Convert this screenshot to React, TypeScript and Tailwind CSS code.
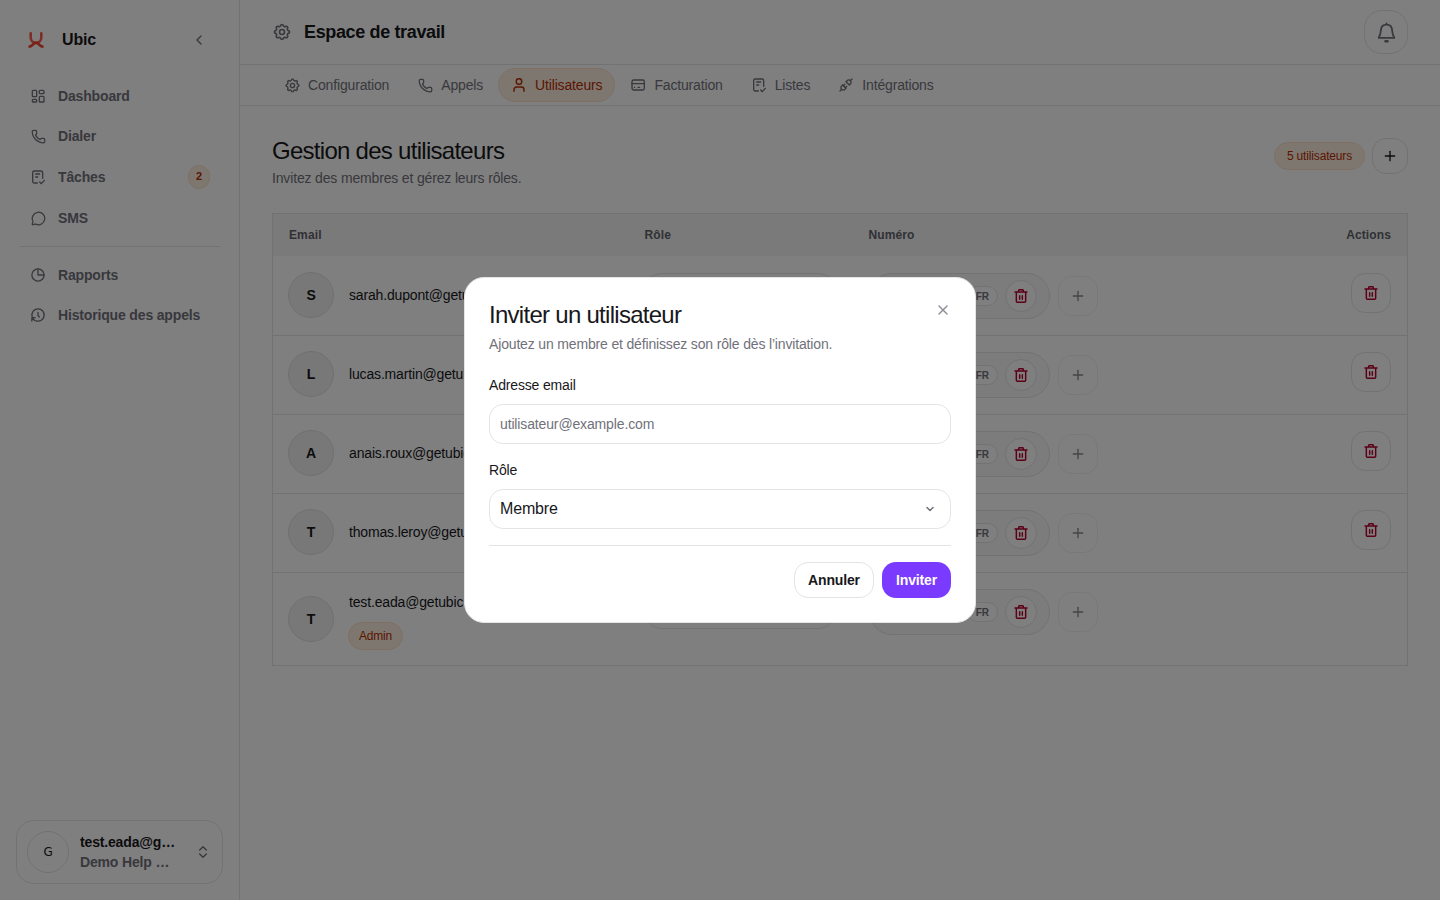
import React, { useState } from 'react';
import { ChevronDown, ChevronLeft, ChevronsUpDown, MessageCircle, Phone, Plus, X } from 'lucide-react';
import { TbPlugConnected, TbSettings } from 'react-icons/tb';

type IconProps = { className?: string };

const svgProps = {
  viewBox: '0 0 24 24',
  fill: 'none',
  stroke: 'currentColor',
  strokeWidth: 2,
  strokeLinecap: 'round' as const,
  strokeLinejoin: 'round' as const,
};

const LogoIcon = () => (
  <svg viewBox="0 0 16 16" fill="none" strokeWidth="2.6" className="size-4">
    <path d="M2.700 1.300v4.200c0 3 2.400 5.200 5.300 5.200s5.300-2.200 5.300-5.200V1.300" stroke="#ff5c4d" strokeLinecap="round" />
    <path d="M0.500 14.700c4.600 0 4-3.800 7.500-3.800s2.900 3.800 7.500 3.800" stroke="#f0432f" />
  </svg>
);

const DashboardIcon = ({ className }: IconProps) => (
  <svg {...svgProps} className={className}>
    <rect x="3.500" y="3.500" width="6.500" height="9.500" rx="1.300" />
    <rect x="14" y="3.500" width="7" height="5" rx="1.300" />
    <rect x="3.500" y="17" width="6.500" height="4" rx="1.300" />
    <rect x="14" y="12.500" width="7" height="8.500" rx="1.300" />
  </svg>
);

const TaskIcon = ({ className }: IconProps) => (
  <svg {...svgProps} className={className}>
    <path d="M11 21H6.500A2.500 2.500 0 0 1 4 18.500V5.500A2.500 2.500 0 0 1 6.500 3h10A2.500 2.500 0 0 1 19 5.500V14" />
    <path d="M8.500 7.500h6M8.500 12h3M14.500 19.500l2.500 2.500 4.500-5" />
  </svg>
);

const PieIcon = ({ className }: IconProps) => (
  <svg {...svgProps} className={className}>
    <circle cx="12" cy="12" r="9.200" />
    <path d="M12 3v9h9" />
  </svg>
);

const HistoryIcon = ({ className }: IconProps) => (
  <svg {...svgProps} className={className}>
    <path d="M3.200 14.500A9.200 9.200 0 1 1 9 20.700" />
    <path d="M2.800 21v-5h5M3 16l4.500 4.500M12 8v4.500l2 2.500" />
  </svg>
);

const UserIcon = ({ className }: IconProps) => (
  <svg {...svgProps} strokeWidth={2.2} className={className}>
    <rect x="8" y="2.500" width="8" height="8.500" rx="3.500" />
    <path d="M4.500 21.500v-2.500a4 4 0 0 1 4-4h7a4 4 0 0 1 4 4v2.500" />
  </svg>
);

const CardIcon = ({ className }: IconProps) => (
  <svg {...svgProps} className={className}>
    <rect x="3" y="4.500" width="18.500" height="15" rx="2.500" />
    <path d="M3 10h18.500M6.500 15.500h.5M12 15.500h2.500" />
  </svg>
);

const BellIcon = ({ className }: IconProps) => (
  <svg {...svgProps} className={className}>
    <path d="M12 1.500v1.500M12 3c-3.800 0-6.200 2.700-6.400 6.300-.2 3.700-.6 5.700-2.600 8.700h18c-2-3-2.400-5-2.600-8.700C18.200 5.700 15.800 3 12 3Z" />
    <path d="M11 22h2" strokeWidth={3} />
  </svg>
);

const TrashIcon = ({ className }: IconProps) => (
  <svg {...svgProps} strokeWidth={2.200} className={className}>
    <path d="M3 6h18M5 6v14a1.500 1.500 0 0 0 1.500 1.500h11A1.500 1.500 0 0 0 19 20V6M8 5.500l1-3h6l1 3M10 11.500v5.500M14 11.500v5.500" />
  </svg>
);

const navItems = [
  { label: 'Dashboard', icon: DashboardIcon, size: 'size-4' },
  { label: 'Dialer', icon: Phone, size: 'size-[15px]' },
  { label: 'Tâches', icon: TaskIcon, size: 'size-4', badge: 2 },
  { label: 'SMS', icon: MessageCircle, size: 'size-[15px]' },
];

const secondaryItems = [
  { label: 'Rapports', icon: PieIcon, size: 'size-4' },
  { label: 'Historique des appels', icon: HistoryIcon, size: 'size-4' },
];

const tabs = [
  { label: 'Configuration', icon: TbSettings, size: 'size-[17px]' },
  { label: 'Appels', icon: Phone, size: 'size-[15px]' },
  { label: 'Utilisateurs', icon: UserIcon, size: 'size-4' },
  { label: 'Facturation', icon: CardIcon, size: 'size-4' },
  { label: 'Listes', icon: TaskIcon, size: 'size-4' },
  { label: 'Intégrations', icon: TbPlugConnected, size: 'size-4' },
];

const users = [
  { email: 'sarah.dupont@getubic.com' },
  { email: 'lucas.martin@getubic.com' },
  { email: 'anais.roux@getubic.com' },
  { email: 'thomas.leroy@getubic.com' },
  { email: 'test.eada@getubic.com', admin: true },
];

type NavItemProps = { label: string; icon: React.ElementType; size: string; badge?: number };

const NavItem = ({ label, icon: Icon, size, badge }: NavItemProps) => (
  <a href="#" className={`flex items-center gap-3 pl-2.5 text-sm font-bold text-[#71717a] ${badge ? 'h-[38px]' : 'h-9'}`}>
    <span className="flex size-4 items-center justify-center">
      <Icon className={`${size} shrink-0`} />
    </span>
    <span>{label}</span>
    {badge && (
      <span className="ml-auto mr-[9px] flex h-6 w-[22px] items-center justify-center rounded-full border border-[#fddfc5] bg-[#fbeee0] text-[11px] text-[#b92d00]">
        {badge}
      </span>
    )}
  </a>
);

const Sidebar = () => (
  <aside className="flex w-60 shrink-0 flex-col border-r border-[#e4e4e7]">
    <div className="flex h-[78px] items-center pr-8 pl-7 pt-0.5">
      <LogoIcon />
      <span className="ml-[18px] text-base font-bold">Ubic</span>
      <ChevronLeft className="ml-auto size-4 text-[#71717a]" />
    </div>
    <nav className="flex flex-col gap-1 px-5">
      {navItems.map(item => <NavItem key={item.label} {...item} />)}
    </nav>
    <hr className="mt-2.5 mr-[19px] mb-2.5 ml-5 border-[#e4e4e7]" />
    <nav className="flex flex-col gap-1 px-5">
      {secondaryItems.map(item => <NavItem key={item.label} {...item} />)}
    </nav>
    <button className="mx-4 mt-auto mb-4 flex h-16 items-center rounded-[18px] border border-[#e4e4e7] pr-[11px] pl-2.5 text-left">
      <span className="flex size-[42px] shrink-0 items-center justify-center rounded-full border border-[#e4e4e7] font-['DejaVu_Sans',sans-serif] text-xs">G</span>
      <span className="ml-[11px] w-[98px] text-sm font-bold leading-5 whitespace-nowrap">
        <span className="block">test.eada@g…</span>
        <span className="block text-[#71717a]">Demo Help …</span>
      </span>
      <ChevronsUpDown className="ml-auto size-4 text-[#71717a]" />
    </button>
  </aside>
);

const UsersTable = () => (
  <div className="mt-6 border border-[#e4e4e7]">
    <div className="flex h-[42px] items-center bg-[#f4f4f5] px-4 text-xs font-bold tracking-[0.01em] text-[#62626b]">
      <span className="w-[355.5px]">Email</span>
      <span className="w-56">Rôle</span>
      <span>Numéro</span>
      <span className="ml-auto">Actions</span>
    </div>
    {users.map((user, i) => (
      <div
        key={user.email}
        className={`flex pr-4 pl-[15px] ${user.admin ? 'h-[93px]' : 'h-[79px]'} ${i > 0 ? 'border-t border-[#e4e4e7]' : 'pt-px'}`}
      >
        <div className={`flex w-[356px] items-center ${user.admin ? '' : 'h-[76px]'}`}>
          <span className="flex size-[46px] items-center justify-center rounded-full border border-[#e0e0e3] bg-[#f0f0f1] text-sm font-bold">
            {user.email[0].toUpperCase()}
          </span>
          <div className="ml-[15px] text-sm leading-5">
            <div>{user.email}</div>
            {user.admin && (
              <span className="-ml-px mt-2.5 -mb-[3px] flex h-7 w-[55px] items-center justify-center rounded-full border border-[#fddfc5] bg-[#fbeee0] text-xs text-[#b92d00]">
                Admin
              </span>
            )}
          </div>
        </div>
        <div className="mt-4 flex h-10 w-48 items-center justify-between rounded-[18px] border border-[#e4e4e7] px-2.5 text-sm">
          Membre
          <ChevronDown className="size-4 text-[#71717a]" />
        </div>
        <div className="mt-4 ml-[33px] flex h-[46px] w-[181px] items-center justify-end rounded-full border border-[#e4e4e7] bg-[#f9f9fa] pr-3">
          <span className="flex h-5 items-center rounded-full border border-[#e4e4e7] bg-white px-2 text-[10px] font-bold tracking-normal text-[#71717a]">FR</span>
          <button className="ml-[7px] flex size-8 items-center justify-center rounded-full border border-[#e4e4e7] bg-white text-[#b8002f]">
            <TrashIcon className="size-4" />
          </button>
        </div>
        <button className="mt-[19px] ml-2 flex size-10 items-center justify-center rounded-[14px] border border-[#e4e4e7] opacity-50">
          <Plus className="size-4" />
        </button>
        {!user.admin && (
          <button className="mt-4 ml-auto flex size-10 items-center justify-center rounded-[14px] border border-[#e4e4e7] text-[#b8002f]">
            <TrashIcon className="size-4" />
          </button>
        )}
      </div>
    ))}
  </div>
);

const InviteDialog = () => {
  const [email, setEmail] = useState('');

  return (
    <div className="fixed inset-0 flex items-center justify-center bg-black/50">
      <div className="relative h-[346px] w-lg rounded-[20px] border border-[#e4e4e7] bg-white p-6">
        <button className="absolute top-6 right-6 text-[#8e8e96]">
          <X className="size-4" />
        </button>
        <h2 className="mt-px text-2xl leading-6 tracking-[-0.03em]">Inviter un utilisateur</h2>
        <p className="mt-[7px] text-sm leading-5 text-[#71717a]">Ajoutez un membre et définissez son rôle dès l’invitation.</p>
        <label className="mt-[21px] block text-sm leading-5">Adresse email</label>
        <input
          className="mt-[9px] block h-10 w-full rounded-[14px] border border-[#e4e4e7] px-2.5 text-sm tracking-[-0.01em] placeholder:text-[#71717a]"
          placeholder="utilisateur@example.com"
          value={email}
          onChange={e => setEmail(e.target.value)}
        />
        <label className="mt-4 block text-sm leading-5">Rôle</label>
        <button className="mt-[9px] flex h-10 w-full items-center justify-between rounded-[14px] border border-[#e4e4e7] pr-3.5 pl-2.5 text-base">
          Membre
          <ChevronDown className="size-3 text-[#71717a]" strokeWidth={3} />
        </button>
        <div className="mt-4 flex justify-end gap-2 border-t border-[#e4e4e7] pt-4 text-sm font-bold">
          <button className="h-9 w-20 rounded-[14px] border border-[#e4e4e7]">Annuler</button>
          <button className="h-9 w-[69px] rounded-[14px] bg-[#7a3aff] text-white">Inviter</button>
        </div>
      </div>
    </div>
  );
};

const App: React.FC = () => {
  const [activeTab, setActiveTab] = useState('Utilisateurs');

  return (
    <div className="flex h-screen bg-white font-['Liberation_Sans',Arial,sans-serif] tracking-[-0.01em] text-[#18181b]">
      <Sidebar />
      <main className="min-w-0 flex-1">
        <header className="flex h-[65px] items-center border-b border-[#e4e4e7] px-8">
          <TbSettings className="size-5 text-[#71717a]" />
          <h1 className="ml-3 text-lg font-bold tracking-[-0.02em]">Espace de travail</h1>
          <button className="ml-auto flex size-11 items-center justify-center rounded-[18px] border border-[#e4e4e7] text-[#71717a]">
            <BellIcon className="size-[21px]" />
          </button>
        </header>

        {/* Onglets */}
        <div className="flex h-[41px] items-center gap-0.5 border-b border-[#e4e4e7] px-[31px]">
          {tabs.map(({ label, icon: Icon, size }) => (
            <button
              key={label}
              className={`flex h-[34px] items-center gap-2 rounded-full border px-3 text-sm ${activeTab === label ? 'border-[#fddfc5] bg-[#fbeee0] text-[#b92d00]' : 'border-transparent text-[#71717a]'}`}
              onClick={() => setActiveTab(label)}
            >
              <span className="flex size-4 items-center justify-center">
                <Icon className={`${size} shrink-0`} />
              </span>
              {label}
            </button>
          ))}
        </div>

        <section className="px-8 pt-8">
          <div className="flex h-[51px] items-start">
            <div>
              <h2 className="text-2xl leading-[26px] tracking-[-0.03em]">Gestion des utilisateurs</h2>
              <p className="mt-1 text-sm leading-5 text-[#71717a]">Invitez des membres et gérez leurs rôles.</p>
            </div>
            <span className="mt-1 ml-auto flex h-7 w-[91px] items-center justify-center rounded-full border border-[#fddfc5] bg-[#fbeee0] text-xs text-[#b92d00]">5 utilisateurs</span>
            <button className="ml-[7px] flex size-9 items-center justify-center rounded-[14px] border border-[#e4e4e7]">
              <Plus className="size-4" />
            </button>
          </div>
          <UsersTable />
        </section>
      </main>
      <InviteDialog />
    </div>
  );
};

export default App;
